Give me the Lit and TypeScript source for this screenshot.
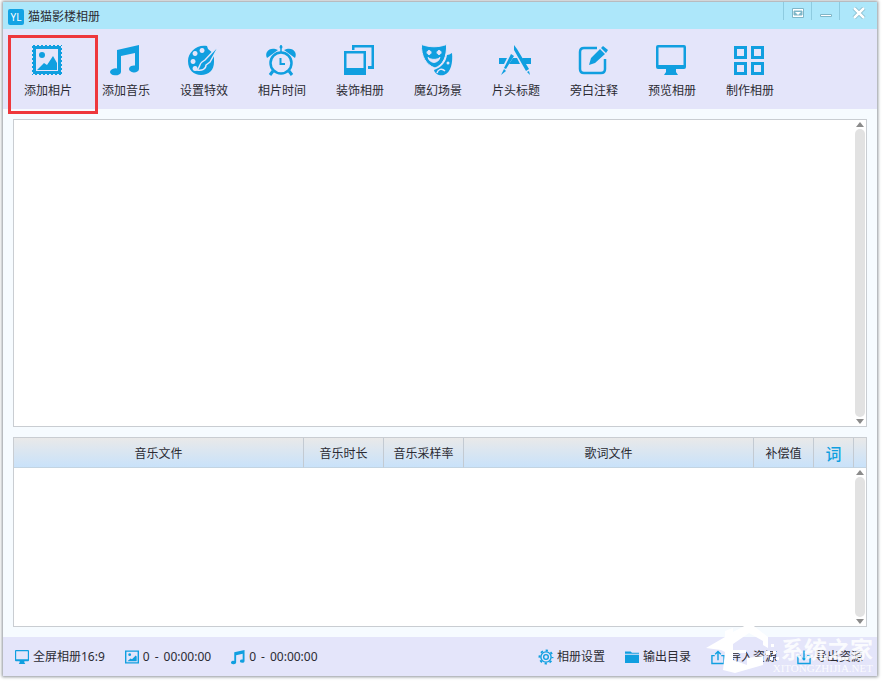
import { LitElement, html, css, svg } from "lit";
import { customElement, property } from "lit/decorators.js";

const icons: Record<string, unknown> = {
  photo: svg`<path fill-rule="evenodd" d="M0 0H30V30H0ZM4 4V26H26V4Z"/><path d="M0 0H30V30H0Z" fill="none" stroke="#e4e5fa" stroke-width="2" stroke-dasharray="2 2" stroke-dashoffset="1"/><circle cx="10" cy="10" r="3"/><path d="M5 25L12 18L15 20L21 11L25 18V25Z"/>`,
  music: svg`<path d="M7 5L29 0V24A5 3.500 0 1 1 25 20.500V8L11 11V27A5.500 3.500 0 1 1 7 23.500Z"/>`,
  palette: svg`<path fill-rule="evenodd" d="M19 1C9-1 0 7 0 16C0 25 6 30 13 30C21 30 26 25 26 17V9L20 4ZM5 14a2.500 2.500 0 1 0 .1 0ZM7 6a2.500 2.500 0 1 0 .1 0ZM14 3a2.500 2.500 0 1 0 .1 0ZM7 21a2.500 2.500 0 1 0 .1 0Z"/><path stroke="#e4e5fa" stroke-width="1.500" d="M32-1L22 17L18 20C18 24 14 26 9 25C12 23 11 19 14 17L17 15Z"/>`,
  alarm: svg`<g fill="none" stroke="currentColor"><circle cx="15" cy="18" r="10.500" stroke-width="2.500"/><path d="M14.500 13V19H19" stroke-width="2"/><path d="M15 0V7" stroke-width="1.500"/><path d="M7 26L4 30M23 26L26 30" stroke-width="3"/></g><path d="M12 5L1 13C-2 7 4 1 12 5ZM18 5L29 13C32 7 26 1 18 5Z"/><circle cx="15" cy="2" r="1.500"/>`,
  frames: svg`<path d="M8 0H30V24H24V21H27.500V2.500H10.500V5H8Z"/><path fill-rule="evenodd" d="M0 6H22V30H0ZM2.500 8.500V23H19.500V8.500Z"/>`,
  masks: svg`<path d="M25 10C27 10 28 9 30 8C31 17 29 28 22 30C17 31 13 29 12 25C20 22 24 17 25 10Z"/><path d="M15 28C16 24 20 23 23 26" fill="none" stroke="#e4e5fa" stroke-width="1.500"/><circle cx="26" cy="18" r="1.500" fill="#e4e5fa"/><path fill-rule="evenodd" stroke="#e4e5fa" stroke-width="1" d="M-.500-.500C8 2.500 16 2.500 24.500-.500C25 12 21 20 13 23C4 20-1 11-.500-.500ZM7 5.500a2 2 0 1 0 .1 0ZM17 5.500a2 2 0 1 0 .1 0ZM6 12.500C8 19 16 19 18 12.500C15 15 9 15 6 12.500Z"/>`,
  title: svg`<path d="M-1 13H7L4 19H-1ZM13 13H17L20 19H9ZM22 13H31V19H25Z"/><path d="M11 9L14 11L6 24L4 23ZM4 24L6 26L1 30ZM14 0L17 4L29 24L26 26L14 5Z"/><path d="M27 27L29 26L30 30Z"/>`,
  note: svg`<path d="M19 3H6Q2 3 2 7V24Q2 28 6 28H23Q27 28 27 24V14" fill="none" stroke="currentColor" stroke-width="2.500"/><path d="M22 4L27 9L17 18L11 20L13 13ZM23 3L25 1L30 5L28 8Z"/>`,
  screen: svg`<path fill-rule="evenodd" d="M2 0H28Q30 0 30 2V22Q30 24 28 24H20V27L22 30H8L10 27V24H2Q0 24 0 22V2Q0 0 2 0ZM2.500 2.500V20H27.500V2.500Z"/>`,
  grid: svg`<path fill="none" stroke="currentColor" stroke-width="3" d="M1.500 2.500H11.500V12.500H1.500ZM18.500 2.500H28.500V12.500H18.500ZM1.500 18.500H11.500V28.500H1.500ZM18.500 18.500H28.500V28.500H18.500Z"/>`,
  image: svg`<path fill-rule="evenodd" d="M0 1H30V29H0ZM3 4V26H27V4Z"/><circle cx="10" cy="10" r="3"/><path d="M5 24L12 18L15 20L23 12L25 14V24Z"/>`,
  gear: svg`<g fill="none" stroke="currentColor"><circle cx="15" cy="15" r="11" stroke-width="3"/><circle cx="15" cy="15" r="5" stroke-width="3"/><circle cx="15" cy="15" r="14" stroke-width="4" stroke-dasharray="5 6" stroke-dashoffset="2.500"/></g>`,
  folder: svg`<path d="M0 3H12L15 6H30V8H0ZM0 10H30V28H0Z"/>`,
  upload: svg`<path d="M8 12H2V29H28V12H22M15 22V4M9 9L15 3L21 9" fill="none" stroke="currentColor" stroke-width="3"/>`,
  download: svg`<path d="M8 12H2V29H28V12H22M15 1V20M9 15L15 21L21 15" fill="none" stroke="currentColor" stroke-width="3"/>`,
};

@customElement("app-icon")
export class AppIcon extends LitElement {
  @property() name = "";
  static styles = css`
    :host { display: block; width: 30px; height: 30px; color: #109fe0; }
    svg { display: block; width: 100%; height: 100%; overflow: visible; fill: currentColor; }
  `;
  render() {
    return html`<svg viewBox="0 0 30 30" aria-hidden="true">${icons[this.name]}</svg>`;
  }
}

@customElement("scroll-rail")
export class ScrollRail extends LitElement {
  static styles = css`
    :host { display: flex; flex-direction: column; align-items: center; gap: 2px; width: 12px; padding: 2px 0; box-sizing: border-box; }
    .thumb { flex: 1; width: 10px; border-radius: 5px; background: #e2e2e2; }
    svg { width: 8px; height: 5px; fill: #8b8b8b; display: block; }
  `;
  render() {
    return html`<svg viewBox="0 0 8 5"><path d="M0 5L4 0L8 5Z" /></svg>
      <div class="thumb"></div>
      <svg viewBox="0 0 8 5"><path d="M0 0L4 5L8 0Z" /></svg>`;
  }
}

const tools = [
  ["photo", "添加相片"], ["music", "添加音乐"], ["palette", "设置特效"], ["alarm", "相片时间"],
  ["frames", "装饰相册"], ["masks", "魔幻场景"], ["title", "片头标题"], ["note", "旁白注释"],
  ["screen", "预览相册"], ["grid", "制作相册"],
];

@customElement("app-root")
export class AppRoot extends LitElement {
  static styles = css`
    :host { display: block; height: 100vh; min-height: 400px; box-sizing: border-box; padding: 2px 5px 5px 3px; position: relative; background: #fff; color: #2b2b33; font: 12px/18px "Noto Sans", "Noto Sans CJK SC", sans-serif; }
    button { font: inherit; color: inherit; background: none; border: 0; padding: 0; margin: 0; }
    .window { height: 100%; box-sizing: border-box; display: flex; flex-direction: column; background: #f6fbff; box-shadow: 0 0 3px 1px #8d9399; }
    .titlebar { display: flex; height: 27px; background: #ade7fa; flex: none; }
    .brand { display: flex; align-items: center; flex: 1; gap: 4px; padding: 2px 0 0 5px; }
    .logo { width: 16px; height: 16px; border-radius: 2px; background: #12a3e4; color: #fff; font-size: 10px; line-height: 16px; text-align: center; }
    h1 { font: inherit; margin: 0; }
    .win { width: 28px; height: 18px; padding-top: 3px; border-left: 1px solid #8ecbe0; display: grid; place-items: center; box-sizing: border-box; }
    .win.close { width: 38px; }
    .win svg { display: block; width: 14px; height: 12px; fill: none; stroke: #7fb6c8; }
    .toolbar { display: flex; height: 80px; background: #e4e5fa; padding-left: 6px; flex: none; }
    .tool { width: 78px; display: flex; flex-direction: column; align-items: center; padding-top: 16px; gap: 7px; }
    .tool app-icon { padding-right: 2px; }
    .main { flex: 1; min-height: 0; display: flex; flex-direction: column; gap: 10px; padding: 10px; }
    .panel { border: 1px solid #c9cdd2; background: #fff; min-height: 0; display: flex; box-sizing: border-box; }
    .photos { flex: 308 1 0; justify-content: flex-end; }
    .songs { flex: 190 1 0; flex-direction: column; }
    .songs scroll-rail { flex: 1; align-self: flex-end; }
    table { border-collapse: separate; border-spacing: 0; table-layout: fixed; width: 100%; flex: none; }
    th { font-weight: 400; height: 30px; padding: 3px 0 0; box-sizing: border-box; background: linear-gradient(#e9e9e9, #c9e2fa); border-right: 1px solid #c3cad2; border-bottom: 1px solid #c3d4e2; }
    th:last-child { border-right: 0; }
    .w80 { width: 80px; } .w60 { width: 60px; } .w40 { width: 40px; } .w13 { width: 12px; }
    .lyric { color: #109fe0; font-size: 16px; font-weight: 500; }
    .status { display: flex; align-items: center; height: 39px; background: #e4e5fa; padding: 0 14px 0 12px; flex: none; box-sizing: border-box; }
    .status app-icon { width: 14px; height: 14px; }
    .item { display: flex; align-items: center; gap: 4px; white-space: nowrap; }
    .left { display: flex; gap: 20px; flex: 1; }
    .right { display: flex; gap: 20px; }
    .count { display: flex; gap: 5px; }
    .marker { position: absolute; left: 8px; top: 35px; width: 90px; height: 79px; box-sizing: border-box; border: 3px solid #ee373c; pointer-events: none; }
    .watermark { position: absolute; right: 9px; bottom: 7px; display: flex; align-items: flex-end; color: #fff; pointer-events: none; }
    .watermark svg { display: block; width: 68px; height: 52px; fill: #fff; overflow: visible; }
    .name { font-size: 23px; line-height: 26px; font-weight: 700; display: block; opacity: 0.85; }
    .site { font: 11px/12px "Liberation Serif", serif; display: block; opacity: 0.85; }
    .mark { display: flex; flex-direction: column; align-items: flex-end; }
  `;
  render() {
    return html`
      <div class="window">
        <header class="titlebar">
          <div class="brand"><span class="logo">YL</span><h1>猫猫影楼相册</h1></div>
          <button class="win" aria-label="菜单"><svg viewBox="0 0 14 12"><path fill="#fff" d="M1.500 1.500H12.500V10.500H1.500Z"/><path fill="#7fb6c8" d="M3 4H11V8H3Z"/><path fill="#fff" stroke="none" d="M4 5H10L7 8Z"/></svg></button>
          <button class="win" aria-label="最小化"><svg viewBox="0 0 14 12"><path fill="#fff" d="M1.500 7.500H12.500V9.500H1.500Z"/></svg></button>
          <button class="win close" aria-label="关闭"><svg viewBox="0 0 14 12"><path stroke-width="4" d="M2 1L12 11M12 1L2 11"/><path stroke="#fff" stroke-width="2.500" d="M2 1L12 11M12 1L2 11"/></svg></button>
        </header>
        <nav class="toolbar">
          ${tools.map(([icon, label]) => html`<button class="tool"><app-icon name=${icon}></app-icon><span>${label}</span></button>`)}
        </nav>
        <main class="main">
          <section class="panel photos"><scroll-rail></scroll-rail></section>
          <section class="panel songs">
            <table><thead><tr>
              <th>音乐文件</th><th class="w80">音乐时长</th><th class="w80">音乐采样率</th><th>歌词文件</th>
              <th class="w60">补偿值</th><th class="w40 lyric">词</th><th class="w13"></th>
            </tr></thead></table>
            <scroll-rail></scroll-rail>
          </section>
        </main>
        <footer class="status">
          <div class="left">
            <span class="item"><app-icon name="screen"></app-icon>全屏相册16:9</span>
            <span class="item"><app-icon name="image"></app-icon><span class="count"><span>0</span><span>-</span><span>00:00:00</span></span></span>
            <span class="item"><app-icon name="music"></app-icon><span class="count"><span>0</span><span>-</span><span>00:00:00</span></span></span>
          </div>
          <div class="right">
            <button class="item"><app-icon name="gear"></app-icon>相册设置</button>
            <button class="item"><app-icon name="folder"></app-icon>输出目录</button>
            <button class="item"><app-icon name="upload"></app-icon>导入资源</button>
            <button class="item"><app-icon name="download"></app-icon>导出资源</button>
          </div>
        </footer>
      </div>
      <div class="marker"></div>
      <div class="watermark">
        <svg viewBox="0 0 68 52" aria-hidden="true">
          <path d="M1 26L20 15V9L28 6V10L45 1L63 15V26L58 23V19L44 11L28 22V28H41V31H28V38L42 43V36L58 34V43L30 51L18 48L20 30L16 28Z"/>
          <path d="M61 29h4v4h-4zM66 22h3v3h-3zM68 29h3v3h-3zM65 35h3v3h-3zM71 35h3v3h-3z"/>
        </svg>
        <span class="mark"><span class="name">系统之家</span><span class="site">XITONGZHIJIA.NET</span></span>
      </div>`;
  }
}
